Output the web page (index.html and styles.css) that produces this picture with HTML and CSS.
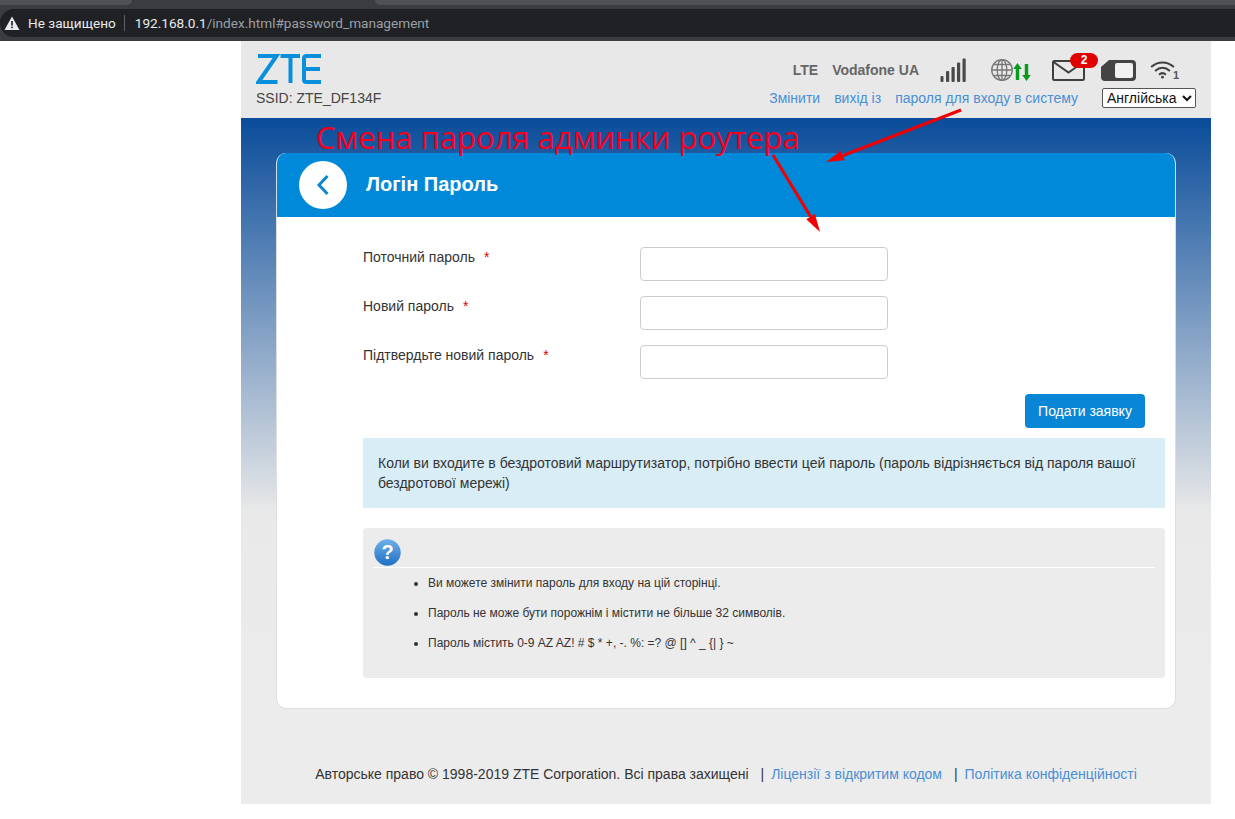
FILE: index.html
```html
<!DOCTYPE html>
<html>
<head>
<meta charset="utf-8">
<title>ZTE</title>
<link rel="stylesheet" href="styles.css">
</head>
<body>

<div id="chrome">
  <div class="tabs"><div class="tab_left"></div><div class="tab_right"></div></div>
  <div class="address">
    <svg class="warn" width="16" height="14" viewBox="0 0 16 14"><path d="M8 0.5L15.5 14H0.5Z" fill="#e8eaed"/><rect x="7.2" y="5" width="1.6" height="4.6" fill="#202124"/><rect x="7.2" y="10.6" width="1.6" height="1.6" fill="#202124"/></svg>
    <span class="insecure">Не защищено</span>
    <span class="sep"></span>
    <span class="url">192.168.0.1<span class="url_rest">/index.html#password_management</span></span>
  </div>
  <div class="chrome_line"></div>
</div>

<div id="page">
  <div id="top">
    <div class="brand">
      <svg class="logo" width="66" height="32" viewBox="0 0 66 32" fill="none" stroke="#0a8fdc" stroke-width="4">
        <path d="M2 3H20.5L2.5 29H21.5"/>
        <path d="M24.5 3H44M34.5 3V30"/>
        <path d="M65 3H50.5Q48 3 48 5.500V26.500Q48 29 50.500 29H65M48 16H64"/>
      </svg>
      <div class="ssid">SSID: ZTE_DF134F</div>
    </div>
    <div class="status">
      <div class="icons">
        <b class="net">LTE</b>
        <b class="net op">Vodafone UA</b>
        <svg class="signal" width="26" height="25" viewBox="0 0 26 25" fill="#4a4a4a"><rect x="0.500" y="18" width="3" height="6" rx="1"/><rect x="6" y="13" width="3.200" height="11" rx="1"/><rect x="11.500" y="9" width="3.200" height="15" rx="1"/><rect x="17" y="4.500" width="3.200" height="19.500" rx="1"/><rect x="22.500" y="0.500" width="3.200" height="23.500" rx="1"/></svg>
        <svg class="globe" width="24" height="22" viewBox="0 0 24 22" fill="none" stroke="#777" stroke-width="1.300"><circle cx="12" cy="11" r="10.300"/><ellipse cx="12" cy="11" rx="4.800" ry="10.300"/><path d="M12 .7V21.300M1.700 11H22.300M3.200 5.500H20.800M3.200 16.500H20.800"/></svg>
        <svg class="arrows" width="18" height="18" viewBox="0 0 18 18" fill="#0a9a1e"><path d="M4.500 0L8.800 6H6.200V17H2.800V6H.2Z"/><path d="M13.500 18L9.200 12H11.800V1H15.200V12H17.800Z"/></svg>
        <div class="mail">
          <svg width="33" height="21" viewBox="0 0 33 21" fill="none" stroke="#3f3f3f" stroke-width="2"><rect x="1" y="1" width="31" height="19" rx="1.500"/><path d="M1.500 2L16.500 12.500L31.500 2"/></svg>
          <span class="badge">2</span>
        </div>
        <svg class="battery" width="35" height="21" viewBox="0 0 35 21"><path d="M8 0H31Q35 0 35 4V17Q35 21 31 21H4Q0 21 0 17V7Z" fill="#444"/><rect x="14" y="3" width="18" height="15" rx="2" fill="#f1f1f1"/></svg>
        <div class="wifi">
          <svg width="25" height="20" viewBox="0 0 27 20" fill="none" stroke="#3f3f3f" stroke-width="2.200"><path d="M1.200 6.800C8.500 .2 18.500 .2 25.800 6.800"/><path d="M5.500 11C10.500 6.800 16.500 6.800 21.500 11"/><path d="M9.800 15C12 13 15 13 17.200 15"/><circle cx="13.500" cy="17.800" r="1.500" fill="#3f3f3f" stroke="none"/></svg>
          <span class="wifi_num">1</span>
        </div>
      </div>
      <div class="links">
        <a class="lnk">Змінити</a>
        <a class="lnk">вихід із</a>
        <a class="lnk">пароля для входу в систему</a>
        <select class="lang"><option>Англійська</option></select>
      </div>
    </div>
  </div>

  <div id="main">
    <div id="card">
      <div class="card_title">
        <div class="back"><svg width="14" height="22" viewBox="0 0 14 22" fill="none" stroke="#0a86d6" stroke-width="3"><path d="M11.500 2L3 11L11.500 20"/></svg></div>
        <h1>Логін Пароль</h1>
      </div>
      <div class="card_body">
        <div class="row">
          <label>Поточний пароль<i>*</i></label>
          <input type="password">
        </div>
        <div class="row">
          <label>Новий пароль<i>*</i></label>
          <input type="password">
        </div>
        <div class="row">
          <label>Підтвердьте новий пароль<i>*</i></label>
          <input type="password">
        </div>
        <div class="submit_line"><button>Подати заявку</button></div>
        <div class="note">Коли ви входите в бездротовий маршрутизатор, потрібно ввести цей пароль (пароль відрізняється від пароля вашої бездротової мережі)</div>
        <div class="help">
          <div class="help_head">
            <svg width="27" height="27" viewBox="0 0 27 27"><defs><linearGradient id="qg" x1="0" y1="0" x2="0" y2="1"><stop offset="0" stop-color="#6fb0ea"/><stop offset="1" stop-color="#1f6fc4"/></linearGradient></defs><circle cx="13.500" cy="13.500" r="13.200" fill="url(#qg)"/><text x="13.500" y="20" class="q">?</text></svg>
          </div>
          <ul>
            <li>Ви можете змінити пароль для входу на цій сторінці.</li>
            <li>Пароль не може бути порожнім і містити не більше 32 символів.</li>
            <li>Пароль містить 0-9 AZ AZ! # $ * +, -. %: =? @ [] ^ _ {| } ~</li>
          </ul>
        </div>
      </div>
    </div>
  </div>

  <div id="footer">
    <span>Авторське право © 1998-2019 ZTE Corporation. Всі права захищені</span>
    <span class="bar">|</span><a class="lnk">Ліцензії з відкритим кодом</a>
    <span class="bar">|</span><a class="lnk">Політика конфіденційності</a>
  </div>
</div>

<!-- annotation drawn on top of the screenshot -->
<div class="caption">Смена пароля админки роутера</div>
<svg class="marks" width="300" height="130" viewBox="0 0 300 130" fill="#f00000" stroke="#f00000" stroke-width="3">
  <path d="M246 2L128 47.500"/>
  <path d="M111 54L126 42.800L129.600 52.200Z" stroke="none"/>
  <path d="M58 47L95.600 108.600"/>
  <path d="M105 124L91.300 111.200L99.900 106Z" stroke="none"/>
</svg>

</body>
</html>
```

FILE: styles.css
```css
html, body {
    margin: 0;
    padding: 0;
    background: #fff;
    font-family: "Liberation Sans", Arial, sans-serif;
    color: #333;
}
#chrome {
    height: 41px;
    background: #3b3c3f;
}
.tabs {
    height: 9px;
    display: flex;
    justify-content: space-between;
}
.tab_left {
    width: 132px;
    height: 5px;
    background: #505154;
    border-radius: 0 0 8px 0;
}
.tab_right {
    width: 860px;
    height: 5px;
    background: #505154;
    border-radius: 0 0 0 8px;
}
.address {
    height: 28px;
    display: flex;
    align-items: center;
    padding-left: 4px;
    background: #202124;
    border-radius: 14px 0 0 14px;
    font-family: "Roboto", "Liberation Sans", sans-serif;
    font-size: 13.600px;
}
.insecure {
    color: #e8eaed;
    margin-left: 8px;
}
.sep {
    width: 1px;
    height: 16px;
    background: #5f6368;
    margin: 0 10px 0 8px;
}
.url {
    color: #e8eaed;
}
.url_rest {
    color: #9aa0a6;
}
.chrome_line {
    height: 4px;
}

#page {
    width: 970px;
    margin-left: 241px;
    background: #ececec;
    height: 763px;
    display: flex;
    flex-direction: column;
}
#top {
    height: 77px;
    flex: none;
    display: flex;
    justify-content: space-between;
    padding: 0 15px;
    background: #e8e8e8;
}
.brand {
    padding-top: 12px;
}
.logo {
    display: block;
}
.ssid {
    font-size: 14px;
    line-height: 16px;
    margin-top: 5px;
    color: #444;
}
.status {
    display: flex;
    flex-direction: column;
    align-items: flex-end;
}
.icons {
    display: flex;
    align-items: center;
    height: 47px;
    padding-top: 11px;
    padding-right: 14px;
    box-sizing: border-box;
}
.net {
    font-size: 14px;
    color: #666;
    margin-right: 14px;
}
.op {
    margin-right: 21px;
}
.signal {
    margin-right: 24px;
}
.globe {
    margin-right: -1px;
}
.arrows {
    margin-top: 4px;
    margin-right: 21px;
}
.mail {
    position: relative;
    width: 33px;
    height: 21px;
    margin-right: 16px;
}
.mail svg {
    display: block;
}
.badge {
    position: absolute;
    left: 18px;
    top: -7px;
    width: 28px;
    height: 15px;
    border-radius: 8px;
    background: #e00000;
    color: #fff;
    font-size: 12px;
    font-weight: bold;
    line-height: 15px;
    text-align: center;
}
.battery {
    margin-right: 14px;
}
.wifi {
    position: relative;
    width: 32px;
    height: 20px;
}
.wifi svg {
    display: block;
}
.wifi_num {
    position: absolute;
    left: 23px;
    top: 9px;
    font-size: 11px;
    font-weight: bold;
    color: #555;
}
.links {
    display: flex;
    align-items: center;
    font-size: 14px;
    height: 20px;
}
.lnk {
    color: #4a8fd6;
}
.links .lnk {
    margin-right: 14px;
}
.links .lnk:nth-child(3) {
    margin-right: 24px;
}
.lang {
    width: 94px;
    height: 20px;
    font-family: "Liberation Sans", sans-serif;
    font-size: 14px;
    background: #fff;
    color: #111;
    border: 1px solid #555;
    border-radius: 2px;
    padding: 0;
}

#main {
    height: 591px;
    flex: none;
    padding: 35px 35px 0;
    box-sizing: border-box;
    background: linear-gradient(#0a4c9a, #e9e9e9 395px, #ececec);
}
#card {
    width: 900px;
    height: 556px;
    background: #fff;
    border-radius: 10px;
    box-sizing: border-box;
    overflow: hidden;
    border: 1px solid #ddd;
    border-top: 0;
}
.card_title {
    height: 64px;
    background: #0089d9;
    display: flex;
    align-items: center;
    margin: 0 -1px;
    padding-left: 23px;
}
.back {
    width: 48px;
    height: 48px;
    border-radius: 50%;
    background: #fff;
    display: flex;
    align-items: center;
    justify-content: center;
}
.card_title h1 {
    margin: 0 0 2px 19px;
    font-size: 20px;
    color: #fff;
}
.card_body {
    padding: 30px 10px 0 86px;
}
.row {
    display: flex;
    height: 34px;
    margin-bottom: 15px;
}
.row label {
    width: 277px;
    font-size: 14px;
    line-height: 20px;
}
.row i {
    color: #d00;
    font-style: normal;
    margin-left: 9px;
}
.row input {
    width: 248px;
    height: 34px;
    box-sizing: border-box;
    border: 1px solid #ccc;
    border-radius: 4px;
    background: #fff;
    padding: 0;
}
.submit_line {
    display: flex;
    justify-content: flex-end;
    padding-right: 20px;
}
button {
    width: 120px;
    height: 34px;
    background: #0a86d6;
    color: #fff;
    border: 0;
    border-radius: 4px;
    font-family: "Liberation Sans", sans-serif;
    font-size: 14px;
}
.note {
    margin-top: 10px;
    height: 70px;
    box-sizing: border-box;
    padding: 15px;
    background: #d9edf7;
    font-size: 14px;
    line-height: 20px;
}
.help {
    margin-top: 20px;
    height: 150px;
    box-sizing: border-box;
    padding: 11px 10px 0;
    background: #ececec;
    border-radius: 4px;
}
.help_head {
    height: 28px;
    border-bottom: 1px solid #fff;
}
.help_head svg {
    display: block;
    margin-left: 1px;
}
.q {
    fill: #fff;
    font-size: 20px;
    font-weight: bold;
    text-anchor: middle;
}
.help ul {
    margin: 0;
    padding: 0 0 0 55px;
    font-size: 12px;
}
.help li {
    height: 30px;
    line-height: 30px;
}

#footer {
    padding-top: 57px;
    text-align: center;
    font-size: 14px;
}
.bar {
    margin: 0 7px 0 8px;
}

.caption {
    position: absolute;
    left: 316px;
    top: 118px;
    font-family: "Open Sans", "Liberation Sans", sans-serif;
    font-size: 31px;
    line-height: 38px;
    color: #f5001e;
}
.marks {
    position: absolute;
    left: 715px;
    top: 108px;
}
```
